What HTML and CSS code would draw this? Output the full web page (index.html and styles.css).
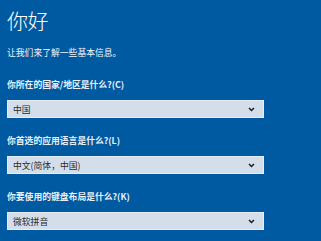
FILE: index.html
```html
<!DOCTYPE html>
<html lang="zh-CN">
<head>
<meta charset="utf-8">
<link rel="stylesheet" href="styles.css">
</head>
<body>
<main class="page">
  <h1 class="title">你好</h1>
  <p class="subtitle">让我们来了解一些基本信息。</p>
  <div class="fields">
    <div class="field">
      <div class="label">你所在的国家/地区是什么?(C)</div>
      <div class="select"><span>中国</span><svg class="chev" viewBox="0 0 8 6" width="7" height="5"><path d="M1 1.2 L4 4.2 L7 1.2" fill="none" stroke="#1a1a1a" stroke-width="1.8"/></svg></div>
    </div>
    <div class="field">
      <div class="label">你首选的应用语言是什么?(L)</div>
      <div class="select"><span>中文(简体，中国)</span><svg class="chev" viewBox="0 0 8 6" width="7" height="5"><path d="M1 1.2 L4 4.2 L7 1.2" fill="none" stroke="#1a1a1a" stroke-width="1.8"/></svg></div>
    </div>
    <div class="field">
      <div class="label">你要使用的键盘布局是什么?(K)</div>
      <div class="select"><span>微软拼音</span><svg class="chev" viewBox="0 0 8 6" width="7" height="5"><path d="M1 1.2 L4 4.2 L7 1.2" fill="none" stroke="#1a1a1a" stroke-width="1.8"/></svg></div>
    </div>
  </div>
</main>
</body>
</html>
```
FILE: styles.css
```css
html, body {
  margin: 0;
  padding: 0;
  background: #005aa1;
  width: 321px;
  height: 241px;
  overflow: hidden;
}
.page {
  display: flex;
  flex-direction: column;
  padding: 8px 0 0 7px;
  font-family: "Noto Sans CJK SC", "Noto Sans", sans-serif;
  color: #ffffff;
}
.title {
  margin: 0;
  font-size: 21px;
  line-height: 24px;
  font-weight: 300;
  letter-spacing: -0.5px;
}
.subtitle {
  margin: 15px 0 0 0;
  font-size: 8.8px;
  line-height: 12px;
  color: #f2f6fa;
}
.fields {
  display: flex;
  flex-direction: column;
  gap: 17px;
  margin-top: 20px;
}
.field {
  display: flex;
  flex-direction: column;
  gap: 9px;
}
.label {
  font-size: 8.8px;
  line-height: 12px;
  font-weight: 700;
  color: #e9eff6;
}
.select {
  box-sizing: border-box;
  width: 257px;
  height: 18px;
  background: #d3deea;
  border: 1px solid #e6edf5;
  display: flex;
  align-items: center;
  justify-content: space-between;
  padding: 0 8px 0 5px;
  font-size: 8.8px;
  color: #2b2b2b;
}
.chev {
  display: block;
}
```
